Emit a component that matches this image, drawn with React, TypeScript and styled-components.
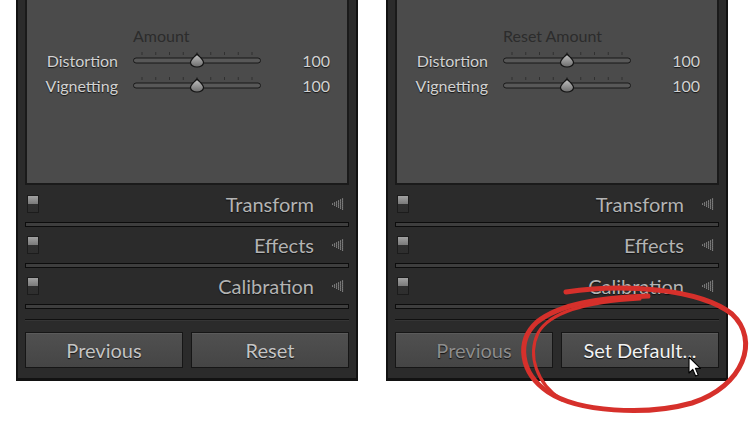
import React from "react";
import styled, { createGlobalStyle } from "styled-components";

const GlobalStyle = createGlobalStyle`
  html, body { margin: 0; padding: 0; background: #fff; }
  body { font-family: Lato, "Liberation Sans", sans-serif; }
`;

const Page = styled.div`
  position: relative;
  width: 750px;
  height: 422px;
  box-sizing: border-box;
  padding-left: 16px;
  display: flex;
  gap: 28px;
  overflow: hidden;
`;

const Panel = styled.div`
  width: 342px;
  height: 381px;
  box-sizing: border-box;
  background: #2b2b2b;
  border: 2px solid #121212;
  border-top: none;
  border-bottom-width: 3px;
  padding: 0 7px 10px;
  display: flex;
  flex-direction: column;
`;

const LensBox = styled.div`
  height: 185px;
  box-sizing: border-box;
  background: #4b4b4b;
  border: 2px solid #1a1a1a;
  border-top: none;
  margin-bottom: 1px;
  padding: 23px 17px 0 0;
  display: grid;
  grid-template-columns: 91px 128px 1fr;
  grid-auto-rows: 25px;
  column-gap: 15px;
  align-content: start;
`;

const Heading = styled.div`
  grid-column: 2;
  align-self: center;
  font-size: 16px;
  color: #2c2c2c;
  white-space: nowrap;
`;

const Label = styled.div`
  align-self: center;
  justify-self: end;
  font-size: 16px;
  color: #d2d2d2;
  text-shadow: 0 1px 1px #151515;
`;

const Section = styled.div`
  height: 36px;
  display: flex;
  align-items: center;
  padding: 0 5px 0 2px;
`;

const Check = styled.div`
  width: 12px;
  height: 18px;
  box-sizing: border-box;
  border: 1px solid #1c1c1c;
  background: linear-gradient(#a2a2a2, #7a7a7a 50%, #303030 50%, #2e2e2e);
`;

const SectionName = styled.div`
  flex: 1;
  text-align: right;
  font-size: 20px;
  color: #b3b3b3;
  text-shadow: 0 1px 1px #111;
  margin-right: 17px;
`;

const Divider = styled.div`
  height: 5px;
  box-sizing: border-box;
  border: 1px solid #0c0c0c;
  background: #3e3e3e;
`;

const Rule = styled.div`
  height: 1px;
  margin-top: 10px;
  background: #101010;
  box-shadow: 0 1px 0 #353535;
`;

const ButtonRow = styled.div`
  margin-top: 12px;
  display: grid;
  grid-template-columns: 1fr 1fr;
  gap: 8px;
  height: 36px;
`;

const Button = styled.div<{ $tone: "normal" | "dim" | "bright" }>`
  position: relative;
  display: flex;
  align-items: center;
  justify-content: center;
  box-sizing: border-box;
  border: 1px solid #161616;
  background: linear-gradient(#505050, #454545);
  box-shadow: inset 0 1px 0 #5b5b5b;
  font-size: 20px;
  color: ${(p) =>
    p.$tone === "dim" ? "#8d8d8d" : p.$tone === "bright" ? "#f2f2f2" : "#c4c4c4"};
  text-shadow: 0 1px 1px #111;
`;

const Pointer = styled.svg`
  position: absolute;
  left: 126px;
  top: 23px;
`;

const Annotation = styled.svg`
  position: absolute;
  left: 0;
  top: 0;
  pointer-events: none;
`;

const Slider = () => {
  const ticks = Array.from({ length: 9 }, (_, i) => 9 + i * 13.75);
  return (
    <svg width={128} height={25} viewBox="0 0 128 25" style={{ alignSelf: "center" }}>
      <defs>
        <linearGradient id="thumb" x1="0" y1="0" x2="0" y2="1">
          <stop offset="0" stopColor="#c4c4c4" />
          <stop offset="1" stopColor="#6c6c6c" />
        </linearGradient>
      </defs>
      {ticks.map((x) => (
        <line key={x} x1={x} x2={x} y1={4} y2={7} stroke="#303030" strokeWidth={1} />
      ))}
      <rect x={0.5} y={10} width={127} height={5} rx={2.5} fill="#585858" stroke="#181818" />
      <path
        d="M64 6 C61.5 9 57.5 11.5 57.5 14.5 A6.5 4.5 0 0 0 70.5 14.5 C70.5 11.5 66.5 9 64 6 Z"
        fill="url(#thumb)"
        stroke="#121212"
        strokeWidth={1.2}
      />
    </svg>
  );
};

// dotted left-pointing triangle used as the collapse marker
const Collapse = () => {
  const dots: { x: number; y: number }[] = [];
  for (let c = 0; c < 6; c++) {
    for (let k = 0; k <= c; k++) dots.push({ x: 1 + c * 2, y: 5 - c + 2 * k + 0.5 });
  }
  return (
    <svg width={13} height={12} viewBox="0 0 13 12">
      {dots.map((d, i) => (
        <rect key={i} x={d.x} y={d.y} width={1.1} height={1.1} fill="#b0b0b0" />
      ))}
    </svg>
  );
};

type PanelProps = { heading: string; right?: boolean };

const DevelopPanel = ({ heading, right }: PanelProps) => (
  <Panel>
    <LensBox>
      <Heading>{heading}</Heading>
      <div />
      <Label>Distortion</Label>
      <Slider />
      <Label>100</Label>
      <Label>Vignetting</Label>
      <Slider />
      <Label>100</Label>
    </LensBox>
    {["Transform", "Effects", "Calibration"].map((name) => (
      <React.Fragment key={name}>
        <Section>
          <Check />
          <SectionName>{name}</SectionName>
          <Collapse />
        </Section>
        <Divider />
      </React.Fragment>
    ))}
    <Rule />
    <ButtonRow>
      <Button $tone={right ? "dim" : "normal"}>Previous</Button>
      <Button $tone={right ? "bright" : "normal"}>
        {right ? "Set Default..." : "Reset"}
        {right && (
          <Pointer width={14} height={22} viewBox="0 0 14 22">
            <path
              d="M1 1 L1 17 L4.8 13.4 L7.6 20 L10.2 18.9 L7.4 12.4 L12.4 12.4 Z"
              fill="#fff"
              stroke="#000"
              strokeWidth={1.1}
              strokeLinejoin="round"
            />
          </Pointer>
        )}
      </Button>
    </ButtonRow>
  </Panel>
);

export default function App() {
  return (
    <>
      <GlobalStyle />
      <Page>
        <DevelopPanel heading="Amount" />
        <DevelopPanel heading="Reset Amount" right />
        <Annotation width={750} height={422} viewBox="0 0 750 422">
          <path
            d="M566 292 C625 283 700 289 732 314 C760 340 744 386 692 403 C646 416 578 412 548 392 C520 373 516 341 537 322 C560 304 598 298 648 296"
            fill="none"
            stroke="#d6302b"
            strokeWidth={5}
            strokeLinecap="round"
          />
          <path
            d="M562 400 C537 384 527 356 538 333 C550 312 585 302 640 299"
            fill="none"
            stroke="#d6302b"
            strokeWidth={3}
            strokeLinecap="round"
          />
        </Annotation>
      </Page>
    </>
  );
}
